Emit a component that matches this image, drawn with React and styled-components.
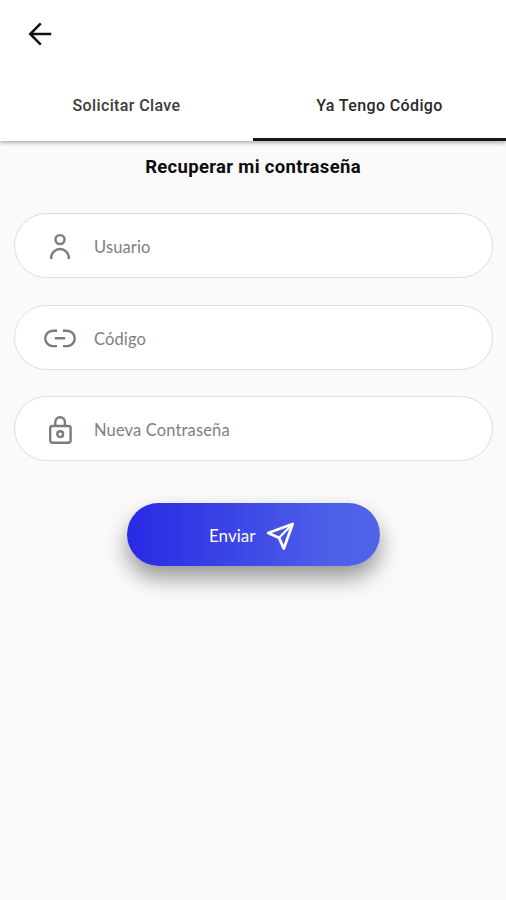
import React from "react";
import styled, { createGlobalStyle } from "styled-components";

const GlobalStyle = createGlobalStyle`
  * {
    box-sizing: border-box;
  }
  body {
    margin: 0;
    background-color: #fafafa;
  }
`;

const Screen = styled.div`
  min-height: 900px;
  background-color: #fafafa;
  font-family: Roboto, sans-serif;
`;

const Header = styled.header`
  height: 141px;
  background-color: #fff;
  box-shadow: 0 1px 5px rgba(0, 0, 0, 0.42);
`;

const TopBar = styled.div`
  height: 70px;
  padding: 19px 0 0 25px;
`;

const BackButton = styled.button`
  display: block;
  padding: 0;
  border: none;
  background: transparent;
  cursor: pointer;
`;

const Tabs = styled.nav`
  display: grid;
  grid-template-columns: 1fr 1fr;
  height: 71px;
`;

const Tab = styled.button`
  padding: 2px 0 0;
  border: none;
  border-bottom: 3px solid ${(props) => (props.$active ? "#16161a" : "transparent")};
  background: transparent;
  color: ${(props) => (props.$active ? "#2a2a2a" : "#3c3c3c")};
  font-family: inherit;
  font-size: 16px;
  font-weight: 500;
  letter-spacing: 0.38px;
  cursor: pointer;
`;

const Title = styled.h1`
  margin: 0;
  padding-top: 14px;
  height: 72px;
  font-size: 18.5px;
  font-weight: 700;
  letter-spacing: 0.32px;
  line-height: 24px;
  text-align: center;
  color: #0c0c0c;
`;

const Form = styled.form`
  display: flex;
  flex-direction: column;
  padding: 0 13px 0 14px;
`;

const Field = styled.label`
  display: flex;
  align-items: center;
  height: 65px;
  margin-bottom: ${(props) => props.$gap}px;
  padding: 0 27px;
  border: 1px solid #dedede;
  border-radius: 33px;
  background-color: #fff;
`;

const FieldIcon = styled.svg`
  flex: none;
  width: 36px;
  height: 35px;
  fill: none;
  stroke: #7c7c7c;
  stroke-width: 2.4;
`;

const Input = styled.input`
  flex: 1;
  min-width: 0;
  margin-left: 16px;
  padding: 3px 0 0;
  border: none;
  outline: none;
  background: transparent;
  font-family: Lato, sans-serif;
  font-size: 16.5px;
  letter-spacing: 0.14px;
  color: #333;
  &::placeholder {
    color: #808080;
    opacity: 1;
  }
`;

const SubmitButton = styled.button`
  display: flex;
  align-items: center;
  align-self: center;
  width: 253px;
  height: 63px;
  padding: 0 0 0 82px;
  border: none;
  border-radius: 32px;
  background: linear-gradient(90deg, #2929e5 0%, #4c5fe8 80%, #5064e8 100%);
  box-shadow: 0 12px 22px rgba(0, 0, 0, 0.4);
  color: #fff;
  font-family: Lato, sans-serif;
  font-size: 17px;
  cursor: pointer;
`;

const SubmitText = styled.span`
  width: 55px;
  padding-top: 1px;
  text-align: left;
`;

const UserIcon = () => (
  <FieldIcon viewBox="0 0 36 35">
    <circle cx="18" cy="11.6" r="4.5" />
    <path d="M9.2 31v-1.2a8.8 8.8 0 0 1 17.6 0V31" />
  </FieldIcon>
);

const LinkIcon = () => (
  <FieldIcon viewBox="0 0 36 35">
    <path d="M15 10.7h-4a7.7 7.7 0 0 0 0 15.4h4M21 10.7h4a7.7 7.7 0 0 1 0 15.4h-4M12.8 18.3h10.4" />
  </FieldIcon>
);

const LockIcon = () => (
  <FieldIcon viewBox="0 0 36 35">
    <rect x="8.2" y="15" width="20.4" height="16.8" rx="2.2" />
    <path d="M13.3 15v-4a4.8 4.8 0 0 1 9.6 0v4" />
    <circle cx="18.2" cy="23.2" r="2.9" />
  </FieldIcon>
);

const SendIcon = () => (
  <svg width="32" height="32" viewBox="0 0 32 32" fill="none" stroke="#fff" strokeWidth="2.8" strokeLinejoin="round">
    <path d="M4.2 14 28.6 5 19.8 29.6 15 18.8Z" />
    <path d="M15 18.8 28.6 5" strokeWidth="2.2" />
  </svg>
);

const fields = [
  { label: "Usuario", type: "text", Icon: UserIcon, gap: 27 },
  { label: "Código", type: "text", Icon: LinkIcon, gap: 26 },
  { label: "Nueva Contraseña", type: "password", Icon: LockIcon, gap: 42 },
];

const App = () => {
  return (
    <Screen>
      <GlobalStyle />
      <Header>
        <TopBar>
          <BackButton aria-label="Volver">
            <svg width="30" height="30" viewBox="0 0 30 30" fill="none" stroke="#111" strokeWidth="2.5">
              <path d="M26.2 15H5.2M15.8 4.4 5.2 15l10.6 10.6" />
            </svg>
          </BackButton>
        </TopBar>
        <Tabs>
          <Tab>Solicitar Clave</Tab>
          <Tab $active>Ya Tengo Código</Tab>
        </Tabs>
      </Header>
      <Title>Recuperar mi contraseña</Title>
      <Form onSubmit={(e) => e.preventDefault()}>
        {fields.map(({ label, type, Icon, gap }) => (
          <Field key={label} $gap={gap}>
            <Icon />
            <Input type={type} placeholder={label} />
          </Field>
        ))}
        <SubmitButton type="submit">
          <SubmitText>Enviar</SubmitText>
          <SendIcon />
        </SubmitButton>
      </Form>
    </Screen>
  );
};

export default App;
